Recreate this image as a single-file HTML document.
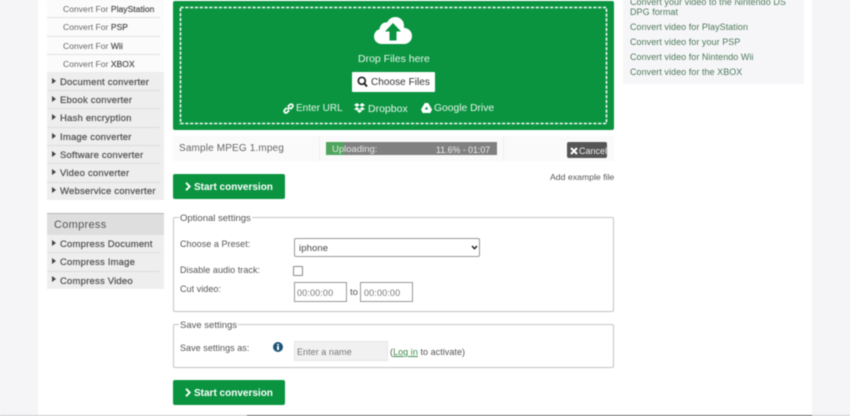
<!DOCTYPE html>
<html><head><meta charset="utf-8">
<style>
html,body{margin:0;padding:0;background:#f5f5f8;}
#p{position:relative;width:850px;height:416px;overflow:hidden;background:#f5f5f8;font-family:"Liberation Sans",sans-serif;color:#555;font-size:10px;filter:blur(.4px);}
#p div,#p span.a,#p svg{position:absolute;}
.t{position:absolute;white-space:nowrap;line-height:12px;}
.s{left:63px;font-size:8.5px;color:#666;letter-spacing:.05px;}
.s b{color:#555;font-weight:normal;-webkit-text-stroke:.25px #555;}
.m{left:60px;font-size:9.5px;color:#555;letter-spacing:.2px;-webkit-text-stroke:.25px #555;}
.tri{width:0;height:0;left:52px;border-left:4px solid #444;border-top:3.5px solid transparent;border-bottom:3.5px solid transparent;}
.l{left:47px;width:113px;height:1px;background:#e2e2e2;}
.r{left:630px;color:#4f7a58;font-size:9px;letter-spacing:.05px;}
.btn{left:173px;width:112px;height:25px;background:#0a9440;border-radius:2px;}
.bt{left:194px;color:#fff;font-weight:bold;font-size:10px;}
.fs{left:173px;width:441px;border:1px solid #c4c4c4;border-radius:2px;box-sizing:border-box;background:#fff;}
.lab{left:180px;font-size:9px;color:#555;letter-spacing:.05px;}
.inp{background:#fff;border:1px solid #999;box-sizing:border-box;}
</style></head><body>
<div id="p">
<div style="left:38px;top:0;width:774px;height:416px;background:#fff"></div>
<div style="left:0;top:415px;width:850px;height:1px;background:#ccc"></div>
<div style="left:247px;top:415px;width:565px;height:1px;background:#666"></div>

<!-- sidebar -->
<div style="left:47px;top:0;width:117px;height:72px;background:#fbfbfb"></div>
<div style="left:47px;top:72px;width:117px;height:128px;background:#eeeeee"></div>
<div class="l" style="top:17px"></div><div class="l" style="top:36px"></div><div class="l" style="top:54px"></div>
<div class="l" style="top:90px;background:#ddd"></div><div class="l" style="top:108px;background:#ddd"></div><div class="l" style="top:127px;background:#ddd"></div><div class="l" style="top:145px;background:#ddd"></div><div class="l" style="top:163px;background:#ddd"></div><div class="l" style="top:182px;background:#ddd"></div>
<span class="t s" style="top:3px">Convert For <b>PlayStation</b></span>
<span class="t s" style="top:21px">Convert For <b>PSP</b></span>
<span class="t s" style="top:40px">Convert For <b>Wii</b></span>
<span class="t s" style="top:58px">Convert For <b>XBOX</b></span>
<div class="tri" style="top:78px"></div><span class="t m" style="top:77px">Document converter</span>
<div class="tri" style="top:96px"></div><span class="t m" style="top:95px">Ebook converter</span>
<div class="tri" style="top:114px"></div><span class="t m" style="top:113px">Hash encryption</span>
<div class="tri" style="top:133px"></div><span class="t m" style="top:132px">Image converter</span>
<div class="tri" style="top:151px"></div><span class="t m" style="top:150px">Software converter</span>
<div class="tri" style="top:169px"></div><span class="t m" style="top:168px">Video converter</span>
<div class="tri" style="top:187px"></div><span class="t m" style="top:186px">Webservice converter</span>

<div style="left:47px;top:213px;width:117px;height:22px;background:#dedede;border-top:1px solid #b5b5b5;box-sizing:border-box"></div>
<span class="t" style="left:54px;top:219px;font-size:11px;color:#555;letter-spacing:.3px">Compress</span>
<div style="left:47px;top:235px;width:117px;height:54px;background:#eeeeee"></div>
<div class="l" style="top:252px;background:#ddd"></div><div class="l" style="top:271px;background:#ddd"></div>
<div class="tri" style="top:240px"></div><span class="t m" style="top:239px">Compress Document</span>
<div class="tri" style="top:258px"></div><span class="t m" style="top:257px">Compress Image</span>
<div class="tri" style="top:276px"></div><span class="t m" style="top:276px">Compress Video</span>

<!-- drop zone -->
<div style="left:173px;top:1px;width:441px;height:129px;background:#0a9440;border-radius:2px"></div>
<svg style="left:179px;top:6px" width="429" height="119" viewBox="0 0 429 119"><rect x="1.500" y="1.500" width="426" height="116" fill="none" stroke="#f4fbf6" stroke-width="1.600" stroke-dasharray="3.200 1.600"/></svg>
<svg style="left:374px;top:16px" width="38" height="29" viewBox="0 0 38 29"><path d="M8 28C3 28 0 24.500 0 20.500C0 17 2.500 14 5.500 13.300C6 8.500 9.500 6 13 6.500C15 2.500 18.500 1 21.500 1C26.500 1 30 5 30 9.500C30 10.500 30 11 29.800 11.800C34.500 12 38 15.500 38 20C38 24.500 34.500 28 30 28Z" fill="#fff"/><path d="M19 7L27 15.500H22.500V24.500H15.500V15.500H11Z" fill="#0a9440"/></svg>
<span class="t" style="left:358px;top:53px;color:#e8f5ea;font-size:10.5px">Drop Files here</span>
<div style="left:352px;top:72px;width:83px;height:20px;background:#fff;border-radius:1px"></div>
<svg style="left:357px;top:76px" width="11" height="12" viewBox="0 0 11 12"><circle cx="4.800" cy="4.800" r="3.500" fill="none" stroke="#222" stroke-width="1.700"/><path d="M7.300 7.500L10 10.500" stroke="#222" stroke-width="2"/></svg>
<span class="t" style="left:371px;top:77px;color:#333;font-size:10px;letter-spacing:.05px">Choose Files</span>
<svg style="left:283px;top:103px" width="11" height="11" viewBox="0 0 11 11"><path d="M4.500 6.500L6.800 4.200M3.700 4.800L2 6.500C.8 7.700.9 8.700 1.700 9.400C2.400 10.100 3.400 10.200 4.500 9L6.200 7.300M4.800 3.700L6.500 2C7.700.8 8.700.9 9.400 1.700C10.100 2.400 10.200 3.400 9 4.500L7.300 6.200" fill="none" stroke="#fff" stroke-width="1.800"/></svg>
<span class="t" style="left:296px;top:103px;color:#e8f5ea;font-size:10px">Enter URL</span>
<svg style="left:354px;top:103px" width="11" height="10" viewBox="0 0 11 10"><path d="M3 0L5.500 2L3 4L0 2ZM8 0L11 2L8 4L5.500 2ZM3 4L5.500 6L3 7.500L0 6ZM8 4L11 6L8 7.500L5.500 6ZM3 8L5.500 6.500L8 8L5.500 10Z" fill="#fff"/></svg>
<span class="t" style="left:368px;top:103px;color:#e8f5ea;font-size:10.5px">Dropbox</span>
<svg style="left:421px;top:103px" width="11" height="10" viewBox="0 0 11 10"><path d="M3.800 0H7.200L11 6.500L9.300 10H1.700L0 6.500ZM5.500 3.500L3.800 6.500H7.200Z" fill="#fff" fill-rule="evenodd"/></svg>
<span class="t" style="left:434px;top:103px;color:#e8f5ea;font-size:10.3px">Google Drive</span>

<!-- upload row -->
<div style="left:173px;top:136px;width:441px;height:25px;background:#fafafa"></div>
<div style="left:319px;top:136px;width:1px;height:25px;background:#eee"></div>
<div style="left:503px;top:136px;width:1px;height:25px;background:#eee"></div>
<span class="t" style="left:179px;top:143px;font-size:10px;color:#666;letter-spacing:.15px">Sample MPEG 1.mpeg</span>
<div style="left:326px;top:142px;width:171px;height:13px;background:#808080"></div>
<div style="left:326px;top:142px;width:18px;height:13px;background:#4fa55c"></div>
<span class="t" style="left:332px;top:144px;font-size:9.5px;color:#e6e6e6">Uploading:</span>
<span class="t" style="left:436px;top:144px;font-size:8.8px;color:#eee">11.6% - 01:07</span>
<div style="left:567px;top:142px;width:40px;height:16px;background:#555;border-radius:2px"></div>
<svg style="left:570px;top:147px" width="8" height="8" viewBox="0 0 8 8"><path d="M1 1L7 7M7 1L1 7" stroke="#fff" stroke-width="2"/></svg>
<span class="t" style="left:579px;top:145px;font-size:9px;color:#eee">Cancel</span>

<div class="btn" style="top:174px"></div>
<svg style="left:185px;top:182px" width="6" height="9" viewBox="0 0 6 9"><path d="M1 .8L4.700 4.500L1 8.200" fill="none" stroke="#fff" stroke-width="1.900"/></svg>
<span class="t bt" style="top:182px">Start conversion</span>
<span class="t" style="left:550px;top:171px;font-size:8.7px;color:#555">Add example file</span>

<!-- optional -->
<div class="fs" style="top:217px;height:95px"></div>
<span class="t" style="left:179px;top:213px;background:#fff;padding:0 1px;font-size:9.5px;color:#555">Optional settings</span>
<span class="t lab" style="top:238px">Choose a Preset:</span>
<div class="inp" style="left:294px;top:238px;width:186px;height:19px;border-radius:2px"></div>
<span class="t" style="left:299px;top:243px;font-size:9.5px;color:#444;letter-spacing:.1px">iphone</span>
<svg style="left:471px;top:245px" width="7" height="5" viewBox="0 0 7 5"><path d="M1 1L3.500 3.700L6 1" fill="none" stroke="#222" stroke-width="1.500"/></svg>
<span class="t lab" style="top:264px">Disable audio track:</span>
<div class="inp" style="left:293px;top:266px;width:10px;height:10px;border-radius:1px;border-color:#888"></div>
<span class="t lab" style="top:283px">Cut video:</span>
<div class="inp" style="left:294px;top:282px;width:53px;height:20px"></div>
<span class="t" style="left:297px;top:287px;font-size:9px;color:#777;letter-spacing:.15px">00:00:00</span>
<span class="t" style="left:350px;top:287px;font-size:9.5px;color:#555">to</span>
<div class="inp" style="left:360px;top:282px;width:53px;height:20px"></div>
<span class="t" style="left:364px;top:287px;font-size:9px;color:#777;letter-spacing:.15px">00:00:00</span>

<!-- save -->
<div class="fs" style="top:324px;height:44px"></div>
<span class="t" style="left:179px;top:320px;background:#fff;padding:0 1px;font-size:9.5px;color:#555">Save settings</span>
<span class="t lab" style="top:342px">Save settings as:</span>
<svg style="left:273px;top:342px" width="10" height="10" viewBox="0 0 10 10"><circle cx="5" cy="5" r="5" fill="#1c5478"/><rect x="4" y="4" width="2" height="4" fill="#fff"/><rect x="4" y="2" width="2" height="1.300" fill="#fff"/></svg>
<div style="left:294px;top:341px;width:94px;height:20px;background:#f1f1f1;border:1px solid #e6e6e6;box-sizing:border-box"></div>
<span class="t" style="left:297px;top:346px;font-size:9px;color:#777;letter-spacing:.05px">Enter a name</span>
<span class="t" style="left:390px;top:346px;font-size:9px;color:#555;letter-spacing:.05px">(<span style="color:#3f8a4c;text-decoration:underline">Log in</span> to activate)</span>

<div class="btn" style="top:380px"></div>
<svg style="left:185px;top:388px" width="6" height="9" viewBox="0 0 6 9"><path d="M1 .8L4.700 4.500L1 8.200" fill="none" stroke="#fff" stroke-width="1.900"/></svg>
<span class="t bt" style="top:388px">Start conversion</span>

<!-- right -->
<div style="left:623px;top:0;width:181px;height:84px;background:#f6f6f9"></div>
<span class="t r" style="top:-4px">Convert your video to the Nintendo DS</span>
<span class="t r" style="top:6px">DPG format</span>
<span class="t r" style="top:21px">Convert video for PlayStation</span>
<span class="t r" style="top:36px">Convert video for your PSP</span>
<span class="t r" style="top:51px">Convert video for Nintendo Wii</span>
<span class="t r" style="top:66px">Convert video for the XBOX</span>
</div>
</body></html>
